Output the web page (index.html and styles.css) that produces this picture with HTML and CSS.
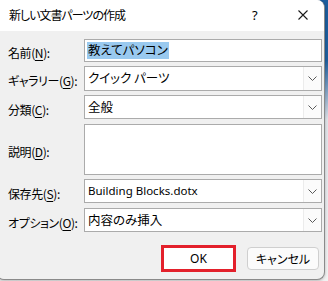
FILE: index.html
```html
<!DOCTYPE html>
<html lang="ja">
<head>
<meta charset="utf-8">
<link rel="stylesheet" href="styles.css">
</head>
<body>
<div class="window">
  <div class="titlebar">
    <span class="title">新しい文書パーツの作成</span>
    <span class="help">?</span>
    <span class="close"><svg width="10" height="10" viewBox="0 0 10 10"><path d="M0.5 0.5 L9.5 9.5 M9.5 0.5 L0.5 9.5" stroke="#1a1a1a" stroke-width="1.1" fill="none"/></svg></span>
  </div>
  <div class="content">
    <div class="form">
      <label class="lbl">名前(<u>N</u>):</label>
      <div class="field input h23"><span class="sel">教えてパソコン</span></div>

      <label class="lbl">ギャラリー(<u>G</u>):</label>
      <div class="field select h25"><span class="val jp">クイック パーツ</span><span class="drop"><svg width="9" height="5" viewBox="0 0 9 5"><path d="M0.5 0.5 L4.5 4.5 L8.5 0.5" stroke="#5a5a5a" fill="none"/></svg></span></div>

      <label class="lbl">分類(<u>C</u>):</label>
      <div class="field select h24"><span class="val jp">全般</span><span class="drop"><svg width="9" height="5" viewBox="0 0 9 5"><path d="M0.5 0.5 L4.5 4.5 L8.5 0.5" stroke="#5a5a5a" fill="none"/></svg></span></div>

      <label class="lbl">説明(<u>D</u>):</label>
      <div class="field area"></div>

      <label class="lbl">保存先(<u>S</u>):</label>
      <div class="field select h24"><span class="val latin">Building Blocks.dotx</span><span class="drop"><svg width="9" height="5" viewBox="0 0 9 5"><path d="M0.5 0.5 L4.5 4.5 L8.5 0.5" stroke="#5a5a5a" fill="none"/></svg></span></div>

      <label class="lbl">オプション(<u>O</u>):</label>
      <div class="field select h24"><span class="val jp">内容のみ挿入</span><span class="drop"><svg width="9" height="5" viewBox="0 0 9 5"><path d="M0.5 0.5 L4.5 4.5 L8.5 0.5" stroke="#5a5a5a" fill="none"/></svg></span></div>
    </div>
    <div class="buttons">
      <div class="btn ok">OK</div>
      <div class="btn cancel">キャンセル</div>
    </div>
  </div>
</div>
</body>
</html>
```
FILE: styles.css
```css
html, body {
  margin: 0;
  padding: 0;
}
body {
  width: 328px;
  height: 281px;
  overflow: hidden;
  background: linear-gradient(to bottom, #1d5d9c 0px, #1d5d9c 60px, #dfe3e8 120px, #f2f2f2 100%);
  font-family: "Noto Sans", "Noto Sans CJK JP", sans-serif;
  font-size: 12px;
  color: #000;
}
.window {
  margin-left: -4px;
  width: 327px;
  height: 279px;
  border: 1px solid #8a8a8a;
  border-top: none;
  border-radius: 0 8px 8px 8px;
  background: #f0f0f0;
  overflow: hidden;
  display: flex;
  flex-direction: column;
  box-shadow: 0 1px 3px rgba(0,0,0,0.25);
}
.titlebar {
  height: 31px;
  background: #ffffff;
  display: flex;
  align-items: center;
  padding-left: 12px;
  flex-shrink: 0;
}
.title {
  font-family: "Noto Sans CJK JP", sans-serif;
  font-feature-settings: "palt";
  font-size: 12px;
  letter-spacing: -1px;
  flex: 1;
  line-height: 1;
  margin-top: -1px;
}
.help {
  font-family: "Noto Sans", sans-serif;
  font-size: 13px;
  width: 10px;
  margin-right: 36px;
  margin-top: -1px;
}
.close {
  display: flex;
  margin-right: 16px;
  margin-top: -1px;
}
.content {
  padding: 8px 3px 0 11px;
  display: flex;
  flex-direction: column;
}
.form {
  display: grid;
  grid-template-columns: 76px 238px;
  align-items: center;
}
.lbl {
  font-family: "Noto Sans CJK JP", sans-serif;
  font-feature-settings: "palt";
  font-size: 12px;
  letter-spacing: -0.4px;
  line-height: 1;
  white-space: nowrap;
}
.lbl u {
  text-decoration: underline;
  text-underline-offset: 2px;
}
.field {
  box-sizing: border-box;
  border: 1px solid #ababab;
  background: #fff;
  display: flex;
  align-items: center;
  font-size: 12px;
  line-height: 1;
}
.h23 { height: 23px; margin-bottom: 4px; }
.h25 { height: 25px; margin-bottom: 4px; }
.h24 { height: 24px; margin-bottom: 5px; }
.area { height: 51px; margin-bottom: 4px; }
.input { padding-left: 2px; }
.sel {
  background: #99c9ef;
  padding: 2px 1px 2px 1px;
  font-family: "Noto Sans CJK JP", sans-serif;
  font-feature-settings: "palt";
  font-size: 12.5px;
}
.select { justify-content: space-between; padding-left: 3px; }
.jp {
  font-family: "Noto Sans CJK JP", sans-serif;
  font-feature-settings: "palt";
  font-size: 12.5px;
}
.latin {
  font-family: "Noto Sans", sans-serif;
  font-size: 11.5px;
}
.drop {
  width: 17px;
  align-self: stretch;
  border-left: 1px solid #ececec;
  display: flex;
  align-items: center;
  justify-content: center;
  background: #fbfbfb;
}
.buttons {
  display: flex;
  justify-content: flex-end;
  align-items: center;
  gap: 11px;
  margin-top: 8px;
  padding-right: 2px;
}
.btn {
  box-sizing: border-box;
  display: flex;
  align-items: center;
  justify-content: center;
  font-size: 12px;
}
.ok {
  width: 75px;
  height: 27px;
  border: 3px solid #e3202b;
  background: #fff;
  font-family: "Noto Sans", sans-serif;
  font-size: 12px;
}
.cancel {
  width: 72px;
  height: 23px;
  border: 1px solid #cfcfcf;
  border-radius: 4px;
  background: #fbfbfb;
  font-family: "Noto Sans CJK JP", sans-serif;
  font-feature-settings: "palt";
}
```
